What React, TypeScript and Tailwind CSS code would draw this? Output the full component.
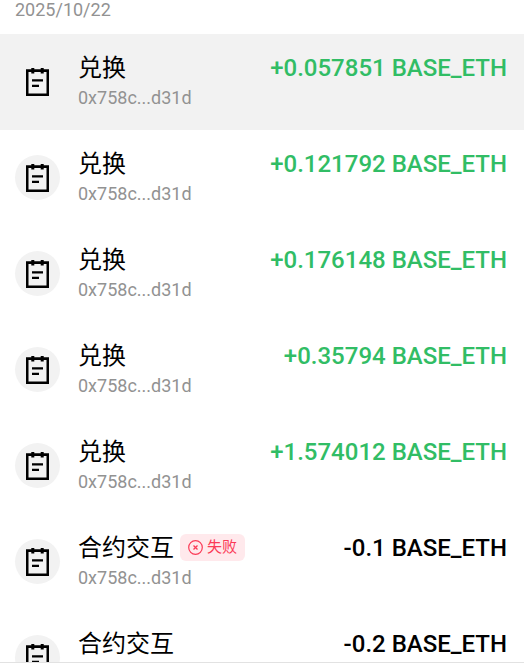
import clsx from 'clsx'

type Transaction = {
  id: number
  title: string
  address: string
  amount: string
  incoming?: boolean
  failed?: boolean
}

const transactions: Transaction[] = [
  { id: 1, title: '兑换', address: '0x758c...d31d', amount: '+0.057851 BASE_ETH', incoming: true },
  { id: 2, title: '兑换', address: '0x758c...d31d', amount: '+0.121792 BASE_ETH', incoming: true },
  { id: 3, title: '兑换', address: '0x758c...d31d', amount: '+0.176148 BASE_ETH', incoming: true },
  { id: 4, title: '兑换', address: '0x758c...d31d', amount: '+0.35794 BASE_ETH', incoming: true },
  { id: 5, title: '兑换', address: '0x758c...d31d', amount: '+1.574012 BASE_ETH', incoming: true },
  { id: 6, title: '合约交互', address: '0x758c...d31d', amount: '-0.1 BASE_ETH', failed: true },
  { id: 7, title: '合约交互', address: '0x758c...d31d', amount: '-0.2 BASE_ETH' },
]

function ContractIcon() {
  return (
    <svg width="23" height="28" viewBox="0 0 23 28" fill="currentColor" aria-hidden="true">
      <path
        fillRule="evenodd"
        d="M0 1.2h5.3V0h3v1.2h6.4V0h3v1.2H23V28H0V1.2Zm2.5 2.8V25.4h18V4h-2.8v1.6h-3V4H8.3v1.6h-3V4H2.5Z"
      />
      <path d="M6 11.2h11v2.3H6zM6 16.8h7v2.3H6z" />
    </svg>
  )
}

function FailedBadge() {
  return (
    <span className="flex h-[27px] items-center gap-1 rounded-md bg-[#ffe9ec] px-2 text-[15px] text-[#fb3a56]">
      <svg width="15" height="15" viewBox="0 0 15 15" fill="none" stroke="currentColor" aria-hidden="true">
        <circle cx="7.5" cy="7.5" r="6.8" strokeWidth="1.2" />
        <path d="m5.5 5.5 4 4m0-4-4 4" strokeWidth="1.3" />
      </svg>
      失败
    </span>
  )
}

function TransactionRow({ tx }: { tx: Transaction }) {
  return (
    <li>
      <button
        type="button"
        className="flex h-24 w-full items-center gap-[18px] pr-[17px] pb-px pl-[15px] text-left"
      >
        <span className="flex size-[45px] shrink-0 items-center justify-center rounded-full bg-[#f2f2f2]">
          <ContractIcon />
        </span>
        <span className="min-w-0 flex-1 pb-1">
          <span className="flex h-9 items-center justify-between">
            <span className="flex items-center gap-1.5">
              <span className="text-2xl">{tx.title}</span>
              {tx.failed && <FailedBadge />}
            </span>
            <span
              className={clsx('text-2xl font-medium whitespace-nowrap', tx.incoming && 'text-[#31bd65]')}
            >
              {tx.amount}
            </span>
          </span>
          <span className="block text-lg leading-6 text-[#929292]">{tx.address}</span>
        </span>
      </button>
    </li>
  )
}

export default function App() {
  return (
    <main className="flex h-screen flex-col bg-white pb-[9px] font-['Roboto','Noto_Sans_CJK_SC',sans-serif] text-black">
      <section className="min-h-0 flex-1 overflow-y-auto border-b border-[#e2e2e2] [scrollbar-width:none]">
        <h2 className="h-[34px] px-[15px] text-lg leading-5 text-[#929292]">2025/10/22</h2>
        <ul className="[&>li:first-child]:bg-[#f2f2f2]">
          {transactions.map((tx) => (
            <TransactionRow key={tx.id} tx={tx} />
          ))}
        </ul>
      </section>
    </main>
  )
}
